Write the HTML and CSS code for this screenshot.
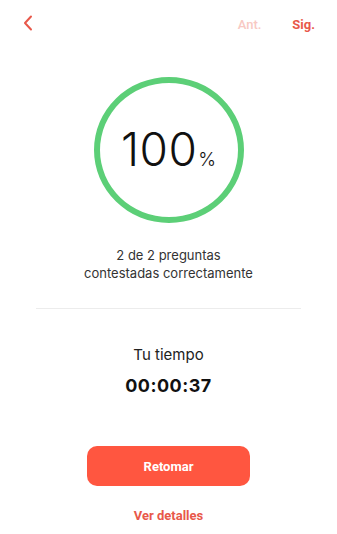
FILE: index.html
```html
<!DOCTYPE html>
<html lang="es">
<head>
<meta charset="utf-8">
<link rel="stylesheet" href="styles.css">
</head>
<body>
<div class="screen">
  <header class="topbar">
    <svg class="back" width="10" height="16" viewBox="0 0 10 16"><path d="M8 1.5L2 8l6 6.5" fill="none" stroke="#e8584a" stroke-width="2" stroke-linecap="round" stroke-linejoin="round"/></svg>
    <div class="nav">
      <span class="prev">Ant.</span>
      <span class="next">Sig.</span>
    </div>
  </header>
  <div class="ring">
    <span class="score">100</span><span class="pct">%</span>
  </div>
  <p class="summary">2 de 2 preguntas<br>contestadas correctamente</p>
  <hr class="divider">
  <div class="time-label">Tu tiempo</div>
  <div class="time">00:00:37</div>
  <button class="retry">Retomar</button>
  <a class="details">Ver detalles</a>
</div>
</body>
</html>
```
FILE: styles.css
```css
* { box-sizing: border-box; }
html, body { margin: 0; padding: 0; background: #fff; }
body { font-family: Inter, "Noto Sans", sans-serif; color: #222; }
.screen { width: 337px; height: 534px; display: flex; flex-direction: column; align-items: center; }
.topbar { width: 100%; height: 46px; display: flex; justify-content: space-between; align-items: flex-start; padding: 15px 22px 0 23px; }
.back { display: block; }
.nav { display: flex; gap: 31px; font-family: Roboto, sans-serif; font-weight: 700; font-size: 13px; padding-top: 2px; }
.prev { color: #f8c9c3; font-weight: 500; }
.next { color: #e8584a; }
.ring { margin-top: 31px; width: 150px; height: 146px; border: 6px solid #5ccf77; border-radius: 50%; display: flex; align-items: baseline; justify-content: center; padding-top: 43px; }
.score { font-size: 46px; font-weight: 300; color: #111; letter-spacing: 0.5px; line-height: 1; }
.pct { font-size: 19px; font-weight: 300; color: #111; margin-left: 1px; }
.summary { margin: 23px 0 0; text-align: center; font-size: 13px; line-height: 18px; color: #333; }
.divider { width: 265px; border: 0; border-top: 1px solid #ececec; margin: 26px 0 0; }
.time-label { margin-top: 36px; font-size: 15px; color: #222; }
.time { margin-top: 11px; font-size: 18px; font-weight: 700; color: #111; letter-spacing: 0.5px; }
.retry { margin-top: 50px; width: 163px; height: 40px; border: 0; border-radius: 10px; background: #ff5640; color: #fff; font-family: Roboto, sans-serif; font-weight: 700; font-size: 13px; }
.details { margin-top: 22px; font-family: Roboto, sans-serif; font-weight: 700; font-size: 13px; color: #e8584a; }
```
